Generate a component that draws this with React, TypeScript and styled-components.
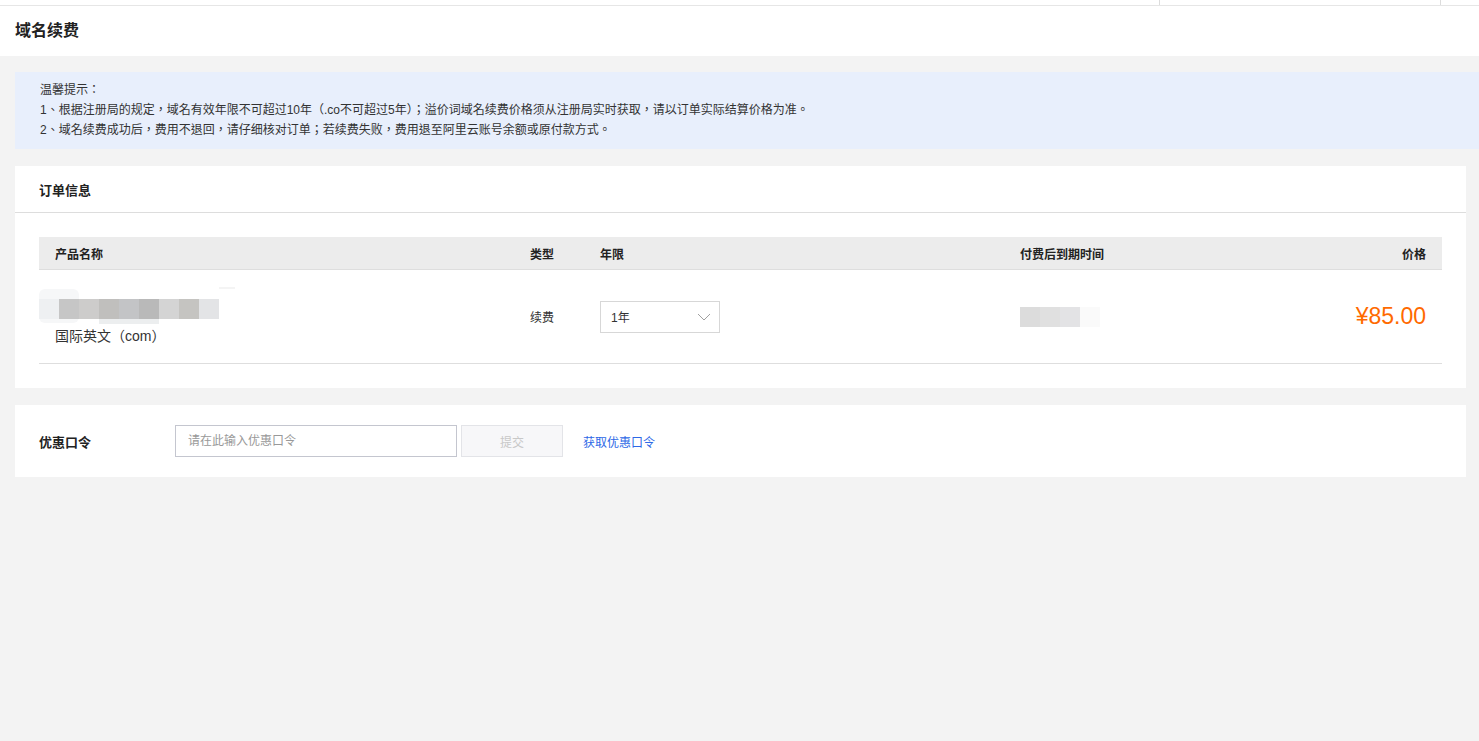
import React from "react";
import styled, { createGlobalStyle } from "styled-components";

const Global = createGlobalStyle`
  html, body { margin: 0; padding: 0; }
  body {
    background: #f3f3f3;
    font-family: "Liberation Sans", Arial, "Noto Sans CJK SC", sans-serif;
    color: #333;
  }
  * { box-sizing: border-box; }
`;

const Page = styled.div`
  min-height: 741px;
  background: #f3f3f3;
`;

const TopStrip = styled.div`
  display: grid;
  grid-template-columns: 1159px 281px 1fr;
  height: 6px;
  background: #fff;
  border-bottom: 1px solid #e6e6e6;
`;

const StripCell = styled.div<{ $divider?: boolean }>`
  border-left: ${(p) => (p.$divider ? "1px solid #dcdcdc" : "none")};
`;

const Header = styled.div`
  height: 50px;
  background: #fff;
  display: flex;
  align-items: center;
  padding-left: 15px;
`;

const Title = styled.h1`
  margin: 0;
  font-size: 16px;
  font-weight: bold;
  color: #222;
  line-height: 20px;
`;

const Content = styled.div`
  padding: 16px 0 0 15px;
  display: flex;
  flex-direction: column;
  gap: 17px;
`;

const Notice = styled.div`
  background: #e8effc;
  padding: 8px 25px 9px;
  font-size: 12px;
  line-height: 20px;
  color: #333;
  font-family: "Liberation Sans", Arial, "Noto Sans CJK TC", sans-serif;
`;

const NoticeLine = styled.div`
  height: 20px;
`;

const Card = styled.div`
  background: #fff;
  margin-right: 13px;
`;

const CardHead = styled.div`
  height: 47px;
  padding: 0 24px;
  display: flex;
  align-items: center;
  border-bottom: 1px solid #dddddd;
`;

const CardTitle = styled.div`
  font-size: 13px;
  font-weight: bold;
  color: #222;
`;

const CardBody = styled.div`
  padding: 24px 24px 24px;
`;

const Row = styled.div<{ $head?: boolean }>`
  display: grid;
  grid-template-columns: 475px 70px 420px 1fr 220px;
  align-items: center;
  background: ${(p) => (p.$head ? "#ececec" : "#fff")};
  height: ${(p) => (p.$head ? "33px" : "94px")};
  border-bottom: 1px solid #dedede;
`;

const HeadCell = styled.div<{ $right?: boolean }>`
  padding: 0 16px;
  font-size: 12px;
  font-weight: bold;
  color: #222;
  text-align: ${(p) => (p.$right ? "right" : "left")};
`;

const Cell = styled.div<{ $right?: boolean }>`
  padding: 0 16px;
  font-size: 12px;
  color: #333;
  text-align: ${(p) => (p.$right ? "right" : "left")};
`;

const NameCell = styled.div`
  padding: 0 16px;
  display: flex;
  flex-direction: column;
`;

const BlurSvg = styled.svg`
  display: block;
  margin-left: -16px;
`;

const NameText = styled.div`
  font-size: 14px;
  line-height: 22px;
  color: #333;
  font-family: "Liberation Sans", Arial, "Noto Sans CJK TC", sans-serif;
`;

const Select = styled.div`
  width: 120px;
  height: 32px;
  border: 1px solid #d7d7d7;
  display: flex;
  align-items: center;
  justify-content: space-between;
  padding: 0 8px 0 10px;
  font-size: 12px;
  color: #333;
`;

const Price = styled.div`
  font-size: 23px;
  color: #ff6a00;
  text-align: right;
  padding-right: 16px;
`;

const CouponCard = styled(Card)`
  padding: 20px 24px;
  display: flex;
  align-items: center;
`;

const CouponLabel = styled.div`
  width: 136px;
  font-size: 13px;
  font-weight: bold;
  color: #222;
`;

const CouponInput = styled.input`
  width: 282px;
  height: 32px;
  border: 1px solid #c4c6cf;
  padding: 0 12px;
  font-size: 12px;
  font-family: inherit;
  outline: none;
  &::placeholder { color: #999; }
`;

const SubmitButton = styled.button`
  width: 102px;
  height: 32px;
  margin-left: 4px;
  background: #f7f7f9;
  border: 1px solid #e3e4e8;
  color: #c8c8c8;
  font-size: 12px;
  font-family: inherit;
`;

const Link = styled.a`
  margin-left: 20px;
  font-size: 12px;
  color: #2d68e6;
  text-decoration: none;
`;

const nameBlocks = ["#eef0f2", "#c6c6c6", "#cdcccb", "#c0bfbd", "#c3c4c6", "#b9b9b9", "#d4d4d4", "#c5c4c1", "#e3e4e6"];
const dateBlocks = ["#dcdcdc", "#e0e0e0", "#e3e3e5", "#fafafa"];

export default function App() {
  return (
    <Page>
      <Global />
      <TopStrip>
        <StripCell />
        <StripCell $divider />
        <StripCell $divider />
      </TopStrip>
      <Header>
        <Title>域名续费</Title>
      </Header>
      <Content>
        <Notice>
          <NoticeLine>温馨提示：</NoticeLine>
          <NoticeLine>1、根据注册局的规定，域名有效年限不可超过10年（.co不可超过5年）；溢价词域名续费价格须从注册局实时获取，请以订单实际结算价格为准。</NoticeLine>
          <NoticeLine>2、域名续费成功后，费用不退回，请仔细核对订单；若续费失败，费用退至阿里云账号余额或原付款方式。</NoticeLine>
        </Notice>
        <Card>
          <CardHead>
            <CardTitle>订单信息</CardTitle>
          </CardHead>
          <CardBody>
            <Row $head>
              <HeadCell>产品名称</HeadCell>
              <HeadCell>类型</HeadCell>
              <HeadCell>年限</HeadCell>
              <HeadCell>付费后到期时间</HeadCell>
              <HeadCell $right>价格</HeadCell>
            </Row>
            <Row>
              <NameCell>
                <BlurSvg width="200" height="38" viewBox="0 0 200 38">
                  <rect x="0" y="2" width="40" height="34" rx="6" fill="#f6f7f8" />
                  <rect x="180" y="-2" width="16" height="4" fill="#f4f4f4" />
                  {nameBlocks.map((c, i) => (
                    <rect key={i} x={i * 20} y="12" width="20" height="20" fill={c} />
                  ))}
                  <rect x="60" y="32" width="60" height="5" fill="#eceeef" />
                </BlurSvg>
                <NameText>国际英文（com）</NameText>
              </NameCell>
              <Cell>续费</Cell>
              <Cell>
                <Select>
                  <span>1年</span>
                  <svg width="14" height="8" viewBox="0 0 14 8">
                    <path d="M1 1 L7 7 L13 1" fill="none" stroke="#a0a0a0" strokeWidth="1" />
                  </svg>
                </Select>
              </Cell>
              <Cell>
                <svg width="80" height="20" viewBox="0 0 80 20" style={{ display: "block" }}>
                  {dateBlocks.map((c, i) => (
                    <rect key={i} x={i * 20} y="0" width="20" height="20" fill={c} />
                  ))}
                </svg>
              </Cell>
              <Price>¥85.00</Price>
            </Row>
          </CardBody>
        </Card>
        <CouponCard>
          <CouponLabel>优惠口令</CouponLabel>
          <CouponInput placeholder="请在此输入优惠口令" />
          <SubmitButton disabled>提交</SubmitButton>
          <Link href="#">获取优惠口令</Link>
        </CouponCard>
      </Content>
    </Page>
  );
}
